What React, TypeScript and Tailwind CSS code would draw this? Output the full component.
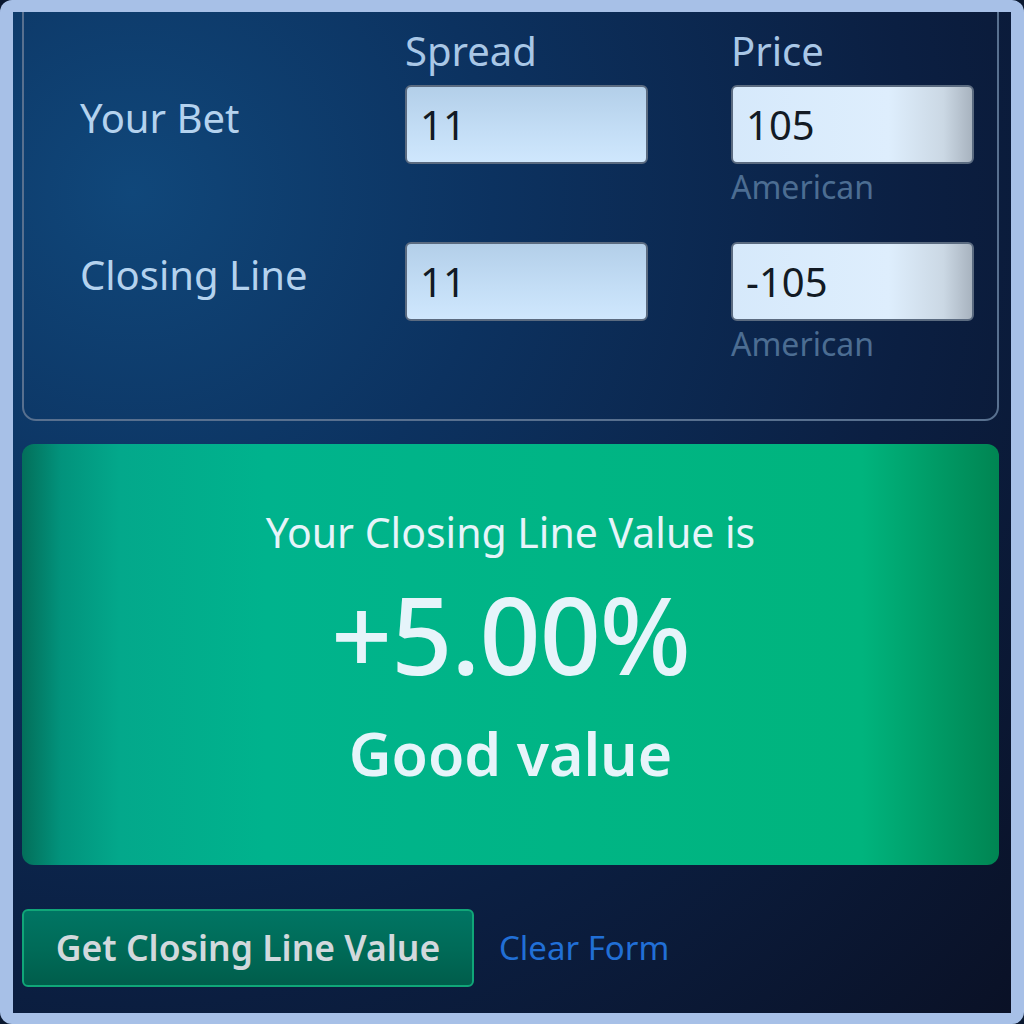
import React from "react";

const font = { fontFamily: '"Noto Sans", "Open Sans", sans-serif' };

function PriceField({ value, shaded }: { value: string; shaded?: boolean }) {
  return (
    <div
      className={
        "h-[79px] w-[243px] rounded-[6px] border-2 border-[#5b6b80] flex items-center px-[13px] text-[40px] text-[#121a24] " +
        (shaded
          ? "bg-[linear-gradient(to_right,#d6e9fb_0%,#deeefd_65%,#cbd8e4_88%,#a8b3bf_100%)]"
          : "bg-[linear-gradient(to_bottom,#b3cfe9_0%,#c4def6_60%,#cfe7fd_100%)]")
      }
    >
      {value}
    </div>
  );
}

export default function App() {
  return (
    <div className="w-[1024px] h-[1024px] bg-[#0a1830]" style={font}>
      <div className="w-full h-full rounded-[12px] bg-[#a7c0e7] pt-[12px] pl-[13px] pr-[13px] pb-[11px]">
        <div className="h-full overflow-hidden bg-[radial-gradient(circle_at_12%_18%,#10477a_0%,#0c3260_30%,#0b1f42_65%,#0a1126_100%)] pl-[9px] pr-[12px] flex flex-col">
          <div className="-mt-[20px] h-[429px] rounded-[14px] border-2 border-[#58708f] pl-[56px] pt-[32px]">
            <div className="grid grid-cols-[242px_243px_243px] gap-x-[83px]">
              <div />
              <div className="text-[40px] leading-[50px] text-[#a9c7e6]">Spread</div>
              <div className="text-[40px] leading-[50px] text-[#a9c7e6]">Price</div>

              <div className="text-[40px] leading-[50px] text-[#b4d2ee] pt-[8px] mt-[9px]">Your Bet</div>
              <div className="mt-[9px]">
                <PriceField value="11" />
              </div>
              <div className="mt-[9px]">
                <PriceField value="105" shaded />
                <div className="text-[32px] leading-[46px] text-[#4c6d92]">American</div>
              </div>

              <div className="text-[40px] leading-[50px] text-[#b4d2ee] pt-[8px] mt-[32px]">Closing Line</div>
              <div className="mt-[32px]">
                <PriceField value="11" />
              </div>
              <div className="mt-[32px]">
                <PriceField value="-105" shaded />
                <div className="text-[32px] leading-[46px] text-[#4c6d92]">American</div>
              </div>
            </div>
          </div>

          <div className="mt-[23px] h-[421px] rounded-[12px] bg-[linear-gradient(to_right,#036f5a_0%,#02937c_4%,#03a88b_10%,#00b38d_25%,#00b585_55%,#00b47d_86%,#008552_100%)] flex flex-col items-center text-[#e6f4fa]">
            <div className="mt-[62px] text-[41px] leading-[52px]">Your Closing Line Value is</div>
            <div className="mt-[14px] text-[107px] leading-[124px] font-medium tracking-[-1px]">+5.00%</div>
            <div className="mt-[18px] text-[59px] leading-[78px] font-semibold">Good value</div>
          </div>

          <div className="mt-[44px] flex items-center">
            <button className="h-[78px] w-[452px] rounded-[6px] border-2 border-[#10a678] bg-[linear-gradient(to_bottom,#007563_0%,#006a57_55%,#005d4b_100%)] text-[35.5px] font-semibold text-[#d2d9dd]">
              Get Closing Line Value
            </button>
            <span className="ml-[25px] text-[33px] text-[#216fd6]">Clear Form</span>
          </div>
        </div>
      </div>
    </div>
  );
}
